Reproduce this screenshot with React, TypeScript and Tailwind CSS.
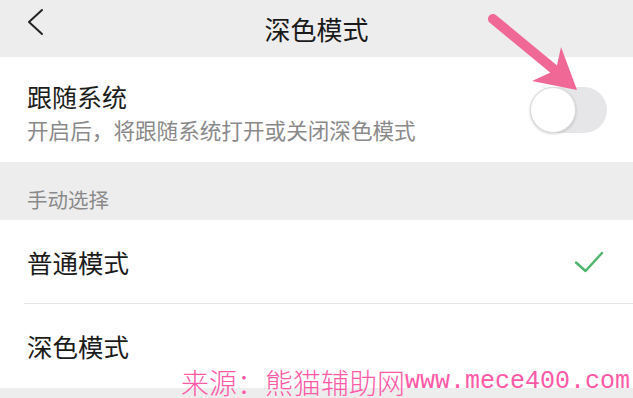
const CJK = { fontFamily: '"Noto Sans CJK SC", "Noto Sans", sans-serif' };

function Toggle() {
  return (
    <div className="relative h-[46px] w-[77px] rounded-full bg-[#e6e6e8]">
      <div className="absolute left-0 top-0 h-[46px] w-[46px] rounded-full border border-[#dcdcdc] bg-white shadow-[0_1px_3px_rgba(0,0,0,0.18)]" />
    </div>
  );
}

function Check() {
  return (
    <svg width="32" height="24" viewBox="0 0 32 24" fill="none">
      <path
        d="M3 12.5 L12.5 21 L29 3"
        stroke="#4fb56c"
        strokeWidth="2.4"
        strokeLinecap="round"
        strokeLinejoin="round"
      />
    </svg>
  );
}

export default function App() {
  return (
    <div className="relative h-[398px] w-[633px] bg-[#ededed]" style={CJK}>
      <div className="relative flex h-[57px] items-center justify-center bg-[#ededed]">
        <svg className="absolute left-[26px] top-[8px]" width="20" height="28" viewBox="0 0 20 28" fill="none">
          <path d="M16 2 L3 14 L16 26" stroke="#222" strokeWidth="2" strokeLinecap="round" strokeLinejoin="round" />
        </svg>
        <span className="text-[26px] leading-none text-[#1a1a1a]">深色模式</span>
      </div>

      <div className="flex h-[105px] justify-between bg-white pl-[27px] pr-[26px]">
        <div className="flex flex-col pt-[24px]">
          <span className="text-[25px] leading-[30px] text-[#1c1c1c]">跟随系统</span>
          <span className="mt-[6px] text-[21.6px] leading-[26px] text-[#8a8a8a]">开启后，将跟随系统打开或关闭深色模式</span>
        </div>
        <div className="pt-[30px]">
          <Toggle />
        </div>
      </div>

      <div className="h-[58px] pl-[27px] pt-[25px] text-[20.5px] leading-[24px] text-[#8a8a8a]">手动选择</div>

      <div className="bg-white">
        <div className="flex h-[83px] items-center justify-between pl-[27px] pr-[28px]">
          <span className="text-[25.5px] leading-none text-[#1c1c1c]">普通模式</span>
          <Check />
        </div>
        <div className="ml-[24px] h-px bg-[#e5e5e5]" />
        <div className="flex h-[84px] items-center pl-[27px]">
          <span className="text-[25.5px] leading-none text-[#1c1c1c]">深色模式</span>
        </div>
      </div>

      <svg className="absolute left-0 top-0" width="633" height="398" viewBox="0 0 633 398" fill="none">
        <path d="M493 19 L556 71" stroke="#f06896" strokeWidth="10" strokeLinecap="round" />
        <polygon points="577,90 532,81 556,70 561,47" fill="#f06896" />
      </svg>

      <div className="absolute bottom-0 right-[3px] flex items-end text-[#ff5aa8]">
        <span className="whitespace-nowrap text-[28px] leading-[32px]" style={{ fontFamily: '"Noto Sans CJK SC", serif', fontWeight: 300 }}>
          来源：熊猫辅助网
        </span>
        <span className="whitespace-nowrap text-[25px] leading-[32px]" style={{ fontFamily: '"Liberation Mono", monospace' }}>
          www.mece400.com
        </span>
      </div>
    </div>
  );
}
